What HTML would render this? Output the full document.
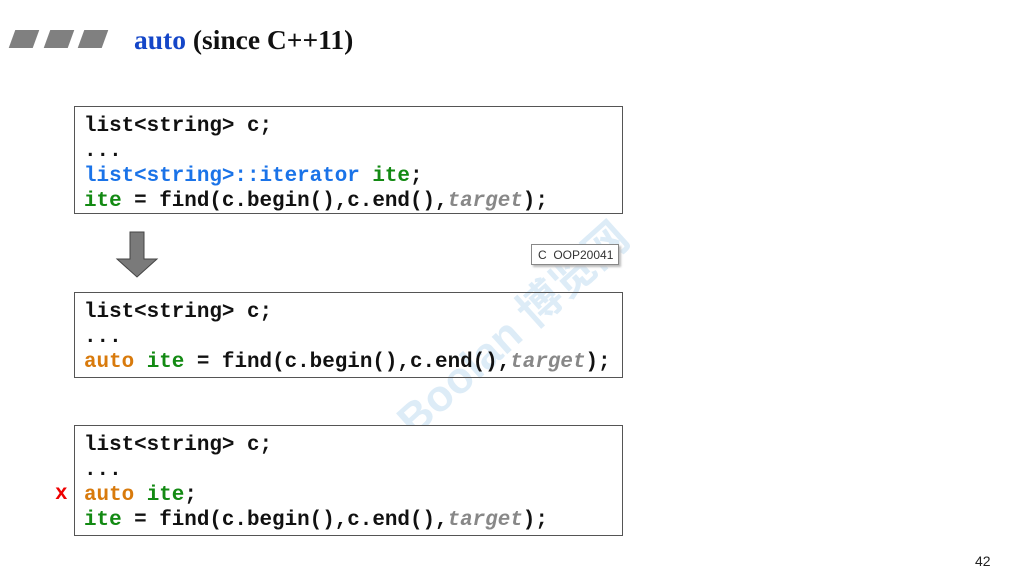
<!DOCTYPE html>
<html><head><meta charset="utf-8"><style>
body{margin:0;width:1016px;height:585px;background:#fff;position:relative;overflow:hidden;font-family:"Liberation Sans",sans-serif}
.box{position:absolute;left:74px;width:547px;border:1px solid #555;background:#fff}
.code{position:absolute;left:84px;font-family:"Liberation Mono",monospace;font-weight:bold;font-size:20.9px;line-height:25px;white-space:pre;color:#111}
.b{color:#1a73e8}.g{color:#138a13}.o{color:#d87a0c}.t{color:#888;font-style:italic}
.para{position:absolute;top:30px;width:24px;height:18px;background:#808080;transform:skewX(-20deg)}
</style></head><body>
<div class="para" style="left:12px"></div>
<div class="para" style="left:47px"></div>
<div class="para" style="left:81px"></div>
<div style="position:absolute;left:134px;top:24px;font-family:'Liberation Serif',serif;font-weight:bold;font-size:27.5px;color:#111"><span style="color:#1446c8">auto</span> (since C++11)</div>

<div class="box" style="top:106px;height:106px"></div>
<div class="code" style="top:114px">list&lt;string&gt; c;
...
<span class="b">list&lt;string&gt;::iterator</span> <span class="g">ite</span>;
<span class="g">ite</span> = find(c.begin(),c.end(),<span class="t">target</span>);</div>

<svg style="position:absolute;left:112px;top:231px" width="50" height="48"><polygon points="10,1 24,1 24,28 37,28 17,46 -3,28 10,28" transform="translate(8,0)" fill="#7a7a7a" stroke="#444" stroke-width="1"/></svg>

<div style="position:absolute;left:380px;top:400px;transform:rotate(-42deg);transform-origin:left top;white-space:nowrap;color:rgba(100,170,220,0.22);font-size:44px;font-weight:bold;font-family:'Liberation Sans','Noto Sans CJK SC',sans-serif">Boolan 博览网</div>

<div style="position:absolute;left:531px;top:244px;width:88px;height:21px;border:1px solid #888;background:#fff;font-size:12px;line-height:21px;color:#333;padding-left:6px;box-sizing:border-box;box-shadow:2px 2px 2px #bbb">C&nbsp;&nbsp;OOP20041</div>

<div class="box" style="top:292px;height:84px;background:transparent"></div>
<div class="code" style="top:300px">list&lt;string&gt; c;
...
<span class="o">auto</span> <span class="g">ite</span> = find(c.begin(),c.end(),<span class="t">target</span>);</div>

<div class="box" style="top:425px;height:109px"></div>
<div class="code" style="top:433px">list&lt;string&gt; c;
...
<span class="o">auto</span> <span class="g">ite</span>;
<span class="g">ite</span> = find(c.begin(),c.end(),<span class="t">target</span>);</div>
<div style="position:absolute;left:55px;top:483px;font-family:'Liberation Mono',monospace;font-weight:bold;font-size:21px;color:#e00">x</div>

<div style="position:absolute;left:975px;top:553px;font-size:14px;color:#222">42</div>
</body></html>
